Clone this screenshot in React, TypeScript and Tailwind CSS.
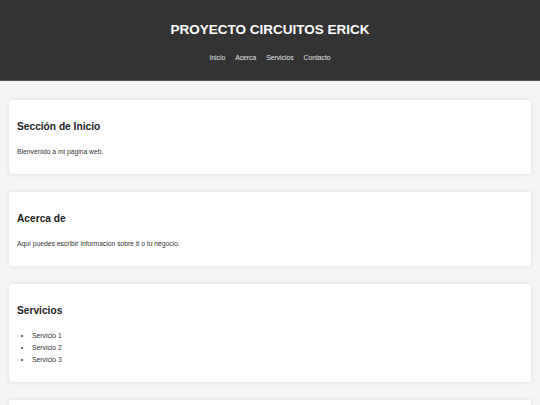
const sections = [
  { title: "Sección de Inicio", text: "Bienvenido a mi página web." },
  { title: "Acerca de", text: "Aquí puedes escribir información sobre ti o tu negocio." },
];

const App = () => {
  return (
    <div className="min-h-screen bg-[#f4f4f4] font-['Liberation_Sans',Arial,sans-serif] text-[#333]">
      <header className="flex flex-col items-center border-b border-[#555] bg-[#333] pt-[18px] pb-[16px] text-white">
        <h1 className="text-[13.5px] font-bold leading-[24px]">PROYECTO CIRCUITOS ERICK</h1>
        <nav className="mt-[10px] flex gap-[10px] text-[6.75px] leading-[12px] text-[#e6e6e6]">
          <a href="#inicio">Inicio</a>
          <a href="#acerca">Acerca</a>
          <a href="#servicios">Servicios</a>
          <a href="#contacto">Contacto</a>
        </nav>
      </header>

      <main className="flex flex-col gap-[18px] px-[9px] pt-[19px] pb-[18px]">
        {sections.map((s) => (
          <section
            key={s.title}
            className="rounded-[3px] bg-white px-[8px] pt-[18px] pb-[16px] shadow-[0_0_5px_rgba(0,0,0,0.1)]"
          >
            <h2 className="text-[10.2px] font-bold leading-[18px] text-[#222]">{s.title}</h2>
            <p className="mt-[10px] text-[6.75px] leading-[12px]">{s.text}</p>
          </section>
        ))}

        <section className="rounded-[3px] bg-white px-[8px] pt-[18px] pb-[16px] shadow-[0_0_5px_rgba(0,0,0,0.1)]">
          <h2 className="text-[10.2px] font-bold leading-[18px] text-[#222]">Servicios</h2>
          <ul className="mt-[10px] list-disc pl-[15px] text-[6.75px] leading-[12px]">
            <li>Servicio 1</li>
            <li>Servicio 2</li>
            <li>Servicio 3</li>
          </ul>
        </section>

        <section className="rounded-[3px] bg-white px-[8px] pt-[18px] pb-[16px] shadow-[0_0_5px_rgba(0,0,0,0.1)]">
          <h2 className="text-[10.2px] font-bold leading-[18px] text-[#222]">Contacto</h2>
          <p className="mt-[10px] text-[6.75px] leading-[12px]">Puedes contactarme a través de este sitio.</p>
        </section>
      </main>
    </div>
  );
};

export default App;
